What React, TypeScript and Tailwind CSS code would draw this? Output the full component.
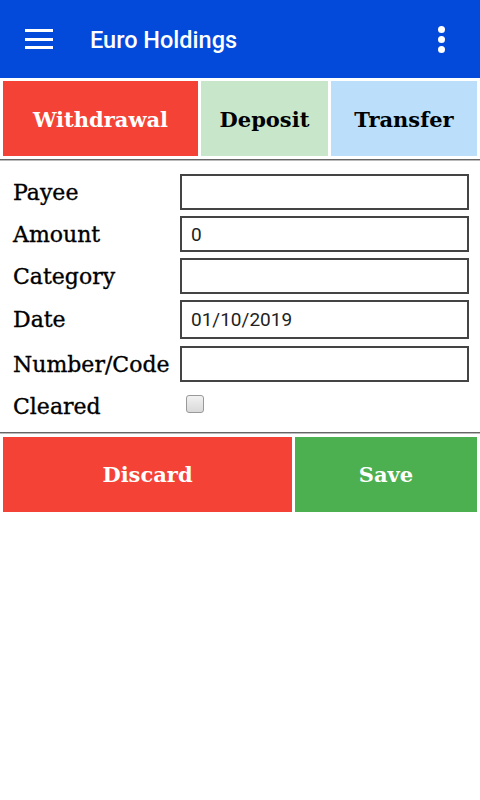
import { useState } from "react";

const slab = { fontFamily: '"DejaVu Serif", "Liberation Serif", serif' };

export default function App() {
  const [tab, setTab] = useState("withdrawal");
  const [form, setForm] = useState({ payee: "", amount: "0", category: "", date: "01/10/2019", code: "" });
  const [cleared, setCleared] = useState(false);

  const fields: { key: keyof typeof form; label: string; tall?: boolean }[] = [
    { key: "payee", label: "Payee" },
    { key: "amount", label: "Amount" },
    { key: "category", label: "Category" },
    { key: "date", label: "Date", tall: true },
    { key: "code", label: "Number/Code" },
  ];

  return (
    <div className="w-[480px] h-[800px] bg-white" style={{ fontFamily: "Roboto, sans-serif" }}>
      {/* App bar */}
      <div className="h-[78px] bg-[#034adb] flex items-center text-white">
        <button className="w-[28px] ml-[25px] flex flex-col gap-[5.5px]">
          <span className="block h-[3px] bg-white" />
          <span className="block h-[3px] bg-white" />
          <span className="block h-[3px] bg-white" />
        </button>
        <h1 className="ml-[37px] mt-[3px] text-[23.5px] font-medium flex-1">Euro Holdings</h1>
        <button className="mr-[35px] flex flex-col items-center gap-[3px]">
          <span className="block w-[7px] h-[7px] rounded-full bg-white" />
          <span className="block w-[7px] h-[7px] rounded-full bg-white" />
          <span className="block w-[7px] h-[7px] rounded-full bg-white" />
        </button>
      </div>

      {/* Transaction type tabs */}
      <div className="flex gap-[3px] px-[3px] pt-[3px] pb-[3px]" style={slab}>
        <button onClick={() => setTab("withdrawal")}
          className="w-[195px] h-[75px] bg-[#f44336] text-white font-bold text-[21px] pt-[2px]">
          Withdrawal
        </button>
        <button onClick={() => setTab("deposit")}
          className="w-[127px] h-[75px] bg-[#c8e6c9] text-black font-bold text-[21px] pt-[2px]">
          Deposit
        </button>
        <button onClick={() => setTab("transfer")}
          className="flex-1 h-[75px] bg-[#bbdefb] text-black font-bold text-[21px] pt-[2px]">
          Transfer
        </button>
      </div>
      <div className="h-[2px] bg-[#666] border-b border-[#bbb]" data-tab={tab} />

      {/* Form */}
      <div className="pt-[13px] pl-[13px] pr-[11px] pb-[8px]">
        {fields.map((f) => (
          <div key={f.key} className={`flex items-center ${f.key === "date" ? "mb-[7px]" : "mb-[6px]"}`}>
            <label className="w-[167px] text-[22px] text-black [-webkit-text-stroke:0.35px_black]" style={slab}>{f.label}</label>
            <input
              value={form[f.key]}
              onChange={(e) => setForm({ ...form, [f.key]: e.target.value })}
              className={`w-[289px] ${f.tall ? "h-[39px]" : "h-[36px]"} border-2 border-[#444] px-[9px] text-[19px] text-[#222] outline-none`}
              style={{ fontFamily: "Roboto, sans-serif" }}
            />
          </div>
        ))}
        <div className="flex items-center h-[36px]">
          <label className="w-[167px] text-[22px] text-black [-webkit-text-stroke:0.35px_black]" style={slab}>Cleared</label>
          <button onClick={() => setCleared(!cleared)}
            className="ml-[6px] -mt-[5px] w-[18px] h-[18px] rounded-[3px] border border-[#999] bg-gradient-to-b from-[#f2f2f2] to-[#d9d9d9]">
            {cleared && <span className="block text-[12px] leading-none">✓</span>}
          </button>
        </div>
      </div>
      <div className="h-[2px] bg-[#666] border-b border-[#bbb]" />

      {/* Actions */}
      <div className="flex gap-[3px] px-[3px] pt-[3px]" style={slab}>
        <button className="w-[289px] h-[75px] bg-[#f44336] text-white font-bold text-[21px]">Discard</button>
        <button className="flex-1 h-[75px] bg-[#4caf50] text-white font-bold text-[21px]">Save</button>
      </div>
    </div>
  );
}
